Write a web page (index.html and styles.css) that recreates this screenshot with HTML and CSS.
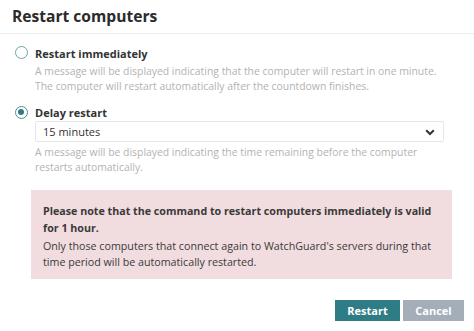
FILE: index.html
```html
<!DOCTYPE html>
<html>
<head>
<meta charset="utf-8">
<link rel="stylesheet" href="styles.css">
</head>
<body>
<div class="dialog">
  <div class="header"><h1 class="title">Restart computers</h1></div>
  <div class="body">
    <div class="option">
      <span class="radio"></span>
      <div class="option-main">
        <div class="label">Restart immediately</div>
        <div class="desc">A message will be displayed indicating that the computer will restart in one minute.<br>The computer will restart automatically after the countdown finishes.</div>
      </div>
    </div>
    <div class="option option-second">
      <span class="radio checked"></span>
      <div class="option-main">
        <div class="label">Delay restart</div>
        <div class="select">
          <span>15 minutes</span>
          <svg class="chev" width="10" height="7" viewBox="0 0 10 7"><path d="M1.2 1.2 L5 5 L8.8 1.2" fill="none" stroke="#333" stroke-width="2"/></svg>
        </div>
        <div class="desc">A message will be displayed indicating the time remaining before the computer<br>restarts automatically.</div>
      </div>
    </div>
    <div class="alert">
      <p class="alert-strong">Please note that the command to restart computers immediately is valid for 1 hour.</p>
      <p class="alert-text">Only those computers that connect again to WatchGuard's servers during that time period will be automatically restarted.</p>
    </div>
  </div>
  <div class="footer">
    <button class="btn btn-primary">Restart</button>
    <button class="btn btn-cancel">Cancel</button>
  </div>
</div>
</body>
</html>
```
FILE: styles.css
```css
* { box-sizing: border-box; }
html, body { margin: 0; padding: 0; background: #fff; }
body { font-family: "Open Sans", "Noto Sans", sans-serif; color: #333; width: 474px; height: 331px; overflow: hidden; }
.dialog { display: flex; flex-direction: column; }
.header { height: 34px; border-bottom: 1px solid #ececec; padding: 0 12px 1px; display: flex; align-items: center; }
.title { margin: 0; font-size: 15.6px; font-weight: 700; color: #2b2b2b; letter-spacing: 0; }
.body { padding: 12px 0 0 15px; }
.option { display: flex; align-items: flex-start; }
.option-second { margin-top: 12px; }
.radio { width: 13px; height: 13px; border: 1.5px solid #6aa6a6; border-radius: 50%; margin-top: 0; flex: none; position: relative; }
.radio.checked { border-color: #4f8f93; }
.radio.checked::after { content: ""; position: absolute; left: 2px; top: 2px; width: 6px; height: 6px; border-radius: 50%; background: #2e7b82; }
.option-main { margin-left: 7px; flex: 1; padding-right: 15px; }
.label { font-size: 11px; font-weight: 700; color: #333; line-height: 15px; margin-top: 0; }
.desc { font-size: 10.4px; color: #b3b3b3; line-height: 15px; margin-top: 3px; }
.option-second .label { line-height: 14px; }
.select { width: 409px; height: 21px; border: 1px solid #e6e6e6; border-radius: 2px; margin-top: 1px; display: flex; align-items: center; justify-content: space-between; padding: 0 8px 0 7px; font-size: 11px; color: #333; }
.chev { margin-top: 1px; }
.option-second .desc { margin-top: 3px; }
.alert { width: 421px; margin: 15px 0 0 16px; background: #f1dddf; padding: 13px 8px 9px 12px; }
.alert p { margin: 0; font-size: 10.7px; color: #3a3a3a; }
.alert-strong { font-weight: 700; line-height: 17px; }
.alert-text { line-height: 16px; margin-top: 1px !important; }
.footer { display: flex; justify-content: flex-end; gap: 3px; padding: 21px 10px 0 0; }
.btn { height: 21px; border: none; font-family: inherit; font-size: 11px; font-weight: 700; color: #fff; padding: 0; cursor: pointer; }
.btn-primary { width: 65px; background: #2f7d84; }
.btn-cancel { width: 61px; background: #a4aeb9; }
```
